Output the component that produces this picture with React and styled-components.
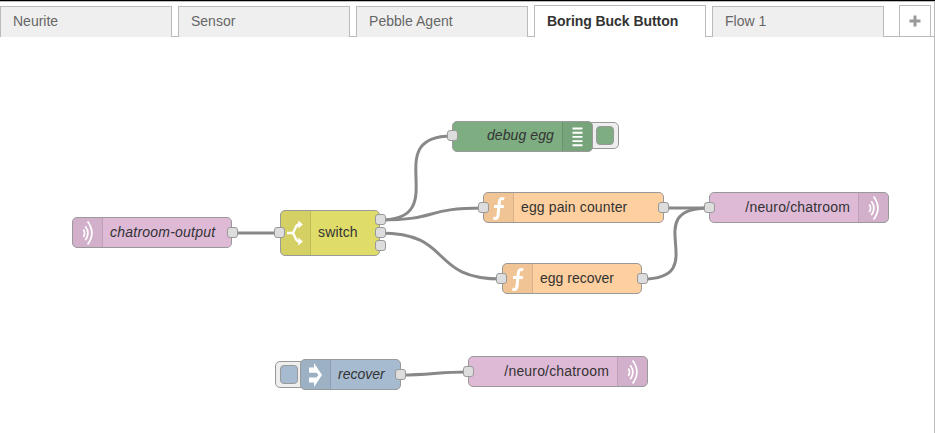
import React from "react";
import styled, { createGlobalStyle } from "styled-components";

const GlobalStyle = createGlobalStyle`
  * { box-sizing: border-box; }
  html, body { margin: 0; background: #fff; overflow: hidden; }
  body { font-family: "Liberation Sans", Arial, sans-serif; font-size: 14px; }
`;

const Workspace = styled.main`
  width: 935px;
  height: 433px;
  display: flex;
  flex-direction: column;
  background: #fff;
  border-top: 1px solid #000;
`;

const Panel = styled.div`
  flex: 1;
  display: flex;
  flex-direction: column;
  border-top: 1px solid #bbb;
  border-right: 1px solid #bbb;
`;

const TabBar = styled.nav`
  height: 35px;
  display: flex;
  align-items: flex-end;
  gap: 6px;
  box-shadow: inset 0 -1px #bbb;
`;

const Tab = styled.button`
  width: 172px;
  height: ${(p) => (p.$active ? 32 : 31)}px;
  margin: 0;
  padding: 0 12px ${(p) => (p.$active ? 1 : 2)}px;
  display: flex;
  align-items: center;
  border: 1px solid #bbb;
  border-bottom: 0;
  background: ${(p) => (p.$active ? "#fff" : "#efefef")};
  color: ${(p) => (p.$active ? "#333" : "#666")};
  font: ${(p) => (p.$active ? "bold" : "normal")} 14px "Liberation Sans", Arial, sans-serif;
  letter-spacing: ${(p) => p.$spacing || 0}px;
  white-space: nowrap;
`;

const AddTab = styled.button`
  width: 32px;
  height: 32px;
  margin: 0 3px 0 auto;
  padding: 0;
  display: flex;
  align-items: center;
  justify-content: center;
  border: 1px solid #bbb;
  background: #fff;
`;

const Canvas = styled.section`
  flex: 1;
  position: relative;
`;

const Wires = styled.svg`
  position: absolute;
  left: 0;
  top: -37px;
  width: 934px;
  height: 433px;
  fill: none;
  stroke: #888;
  stroke-width: 3;
`;

const NodeBox = styled.div`
  position: absolute;
  left: ${(p) => p.$x}px;
  top: ${(p) => p.$y - 37}px;
  width: ${(p) => p.$w}px;
  height: ${(p) => p.$h || 31}px;
  display: flex;
  flex-direction: ${(p) => (p.$end ? "row-reverse" : "row")};
  border: 1px solid #999;
  border-radius: 5px;
  background: ${(p) => p.$color};
`;

const IconCell = styled.div`
  width: 30px;
  flex: none;
  display: flex;
  align-items: center;
  justify-content: center;
  background: rgba(0, 0, 0, 0.05);
  border: 0 solid rgba(0, 0, 0, 0.1);
  border-right-width: ${(p) => (p.$end ? 0 : 1)}px;
  border-left-width: ${(p) => (p.$end ? 1 : 0)}px;
  border-radius: ${(p) => (p.$end ? "0 4px 4px 0" : "4px 0 0 4px")};
`;

const Label = styled.span`
  flex: 1;
  padding: 0 8px ${(p) => p.$lift || 1}px 7px;
  display: flex;
  align-items: center;
  justify-content: ${(p) => (p.$end ? "flex-end" : "flex-start")};
  color: #333;
  font-style: ${(p) => (p.$italic ? "italic" : "normal")};
  letter-spacing: ${(p) => p.$spacing || 0}px;
  white-space: nowrap;
`;

const Port = styled.i`
  position: absolute;
  left: ${(p) => p.$x}px;
  top: ${(p) => p.$y}px;
  width: 11px;
  height: 11px;
  border: 1px solid #999;
  border-radius: 3px;
  background: #ddd;
`;

const ActionButton = styled.div`
  position: absolute;
  left: ${(p) => p.$x}px;
  top: ${(p) => p.$y - 37}px;
  width: 32px;
  height: 27px;
  padding: 3px 4px;
  display: flex;
  justify-content: ${(p) => (p.$end ? "flex-end" : "flex-start")};
  border: 1px solid #999;
  border-radius: 5px;
  background: #eee;
`;

const ButtonFace = styled.span`
  width: 18px;
  height: 19px;
  border: 1px solid #999;
  border-radius: 4px;
  background: ${(p) => p.$color};
`;

const Glyph = styled.svg`
  width: 30px;
  height: 30px;
  flex: none;
  fill: none;
  stroke: #fff;
`;

const glyphs = {
  radio: (
    <g strokeWidth="1.7">
      <path d="M10.3 11.5q2.6 3.7 0 7.4" />
      <path d="M12.3 8.2q5.3 7 0 14" />
      <path d="M14.6 3.6q8.6 11.5 0 23" />
    </g>
  ),
  split: (
    <g>
      <path strokeWidth="2.4" d="M6 15h6l3-6.2q.8-2.3 3.5-2.3M12 15l3 6.2q.8 2.3 3.5 2.3" />
      <path fill="#fff" stroke="none" d="M17.3 2.5v8l4.6-4zM17.3 19.5v8l4.6-4z" />
    </g>
  ),
  fn: (
    <path strokeWidth="3" d="M20.2 5.8c-3-1.2-4.5.4-4.9 3.4l-1.3 13c-.3 3-2 4.1-4.6 2.7M10 13.4h9.8" />
  ),
  list: <path strokeWidth="1.9" d="M9.5 6.5h10M9.5 10.7h10M9.5 14.9h10M9.5 19.1h10M9.5 23.3h10" />,
  inject: (
    <path fill="#fff" stroke="none" d="M8 7.5h5V3l8 12L13 27v-4.5H8v-5h7.5l2-2.5-2-2.2H8z" />
  ),
};

const tabs = [
  { name: "Neurite" },
  { name: "Sensor" },
  { name: "Pebble Agent", spacing: 0.04 },
  { name: "Boring Buck Button", active: true, spacing: -0.06 },
  { name: "Flow 1" },
];

const wires = [
  "M232 233H280",
  "M380 220C455 220 377 136 452 136",
  "M380 220C440 220 423 208 483 208",
  "M380 233C455 233 427 279 502 279",
  "M664 208H709",
  "M642 279C715 279 636 208 709 208",
  "M401 375C430 375 438 372 467 372",
];

const nodes = [
  { x: 72, y: 217, w: 160, color: "#debad7", icon: "radio", label: "chatroom-output", italic: true, spacing: 0.23, ports: [[154, 10]] },
  { x: 280, y: 210, w: 100, h: 46, color: "#e0dc69", icon: "split", label: "switch", lift: 2, spacing: 0.15, ports: [[-7, 17], [94, 4], [94, 17], [94, 30]] },
  { x: 452, y: 121, w: 141, color: "#7ead82", icon: "list", label: "debug egg", italic: true, end: true, lift: 4, spacing: 0.1, ports: [[-6, 9]] },
  { x: 483, y: 192, w: 181, color: "#fecf9f", icon: "fn", label: "egg pain counter", spacing: 0.13, ports: [[-6, 10], [174, 10]] },
  { x: 502, y: 263, w: 140, color: "#fecf9f", icon: "fn", label: "egg recover", ports: [[-7, 10], [134, 10]] },
  { x: 709, y: 192, w: 180, color: "#debad7", icon: "radio", label: "/neuro/chatroom", end: true, spacing: 0.18, ports: [[-6, 10]] },
  { x: 300, y: 359, w: 101, color: "#a6bbcf", icon: "inject", label: "recover", italic: true, ports: [[94, 10]] },
  { x: 468, y: 356, w: 180, color: "#debad7", icon: "radio", label: "/neuro/chatroom", end: true, spacing: 0.18, ports: [[-6, 10]] },
];

function FlowNode({ node }) {
  return (
    <NodeBox $x={node.x} $y={node.y} $w={node.w} $h={node.h} $color={node.color} $end={node.end}>
      <IconCell $end={node.end}>
        <Glyph viewBox="0 0 30 30">{glyphs[node.icon]}</Glyph>
      </IconCell>
      <Label $italic={node.italic} $end={node.end} $lift={node.lift} $spacing={node.spacing}>
        {node.label}
      </Label>
      {node.ports.map(([x, y]) => <Port key={`${x}-${y}`} $x={x} $y={y - 1} />)}
    </NodeBox>
  );
}

export default function App() {
  return (
    <Workspace>
      <GlobalStyle />
      <Panel>
        <TabBar>
          {tabs.map((tab) => (
            <Tab key={tab.name} $active={tab.active} $spacing={tab.spacing}>{tab.name}</Tab>
          ))}
          <AddTab aria-label="Add flow">
            <svg width="12" height="12" viewBox="0 0 12 12">
              <path d="M6 .5v11M.5 6h11" stroke="#999" strokeWidth="3" />
            </svg>
          </AddTab>
        </TabBar>
        <Canvas>
          <Wires viewBox="0 0 934 433">
            {wires.map((d) => <path key={d} d={d} />)}
          </Wires>
          <ActionButton $x={587} $y={122} $end><ButtonFace $color="#7ead82" /></ActionButton>
          <ActionButton $x={275} $y={361}><ButtonFace $color="#a6bbcf" /></ActionButton>
          {nodes.map((node) => <FlowNode key={`${node.x}-${node.y}`} node={node} />)}
        </Canvas>
      </Panel>
    </Workspace>
  );
}
